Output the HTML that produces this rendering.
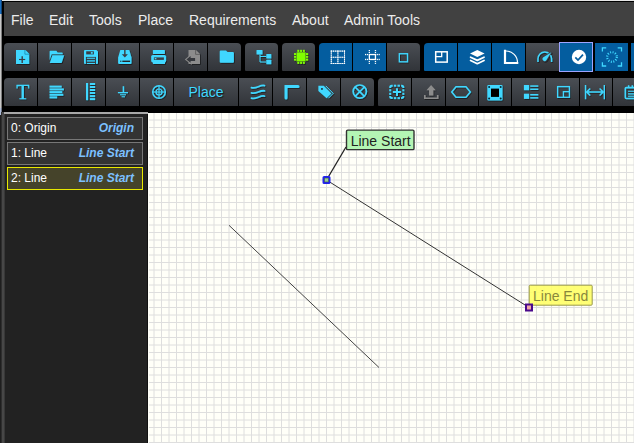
<!DOCTYPE html>
<html><head><meta charset="utf-8">
<style>
html,body{margin:0;padding:0;}
body{width:634px;height:443px;overflow:hidden;background:#000;position:relative;font-family:"Liberation Sans",sans-serif;}
.abs{position:absolute;}
#menubar{left:4px;top:2px;width:630px;height:34px;background:#414141;}
.mi{position:absolute;top:0;height:34px;line-height:36px;font-size:14px;color:#ececec;white-space:nowrap;}
.btn{position:absolute;height:28px;}
.btn.g{background:linear-gradient(#4a4e54,#313439);}
.btn.b{background:#045d9f;}
.btn.foc{box-shadow:0 0 0 1px #9ea4ff;}
.r1{top:43px;}
.r2{top:78px;}
.rl{border-radius:4px 0 0 1px;}
.rr{border-radius:0 4px 1px 0;}
.ra{border-radius:4px 4px 1px 1px;}
#panel{left:4px;top:112px;width:144px;height:331px;background:#222;}
.item{position:absolute;left:3px;width:134px;height:21px;border:1px solid #777;background:#333;font-size:12px;line-height:21px;color:#fff;}
.item .n{position:absolute;left:3px;top:0;}
.item .t{position:absolute;right:8px;top:0;color:#7cc0ff;font-style:italic;font-weight:bold;}
.item.sel{border-color:#e8e800;background:#45432a;}
#canvas{left:148px;top:113px;width:486px;height:330px;background:#fffff8;}
#place{position:absolute;left:174px;top:78px;width:64px;height:28px;line-height:28px;text-align:center;font-size:14px;color:#3fd7ff;text-shadow:1px 1px 1px rgba(0,0,0,.6);}
</style></head><body>
<!-- window edges -->
<div class="abs" style="left:0;top:0;width:634px;height:1px;background:#e6e6e6"></div>
<div class="abs" style="left:0;top:0;width:1px;height:14px;background:#1b6fc0"></div>
<div class="abs" style="left:1px;top:0;width:1px;height:14px;background:#114578"></div>
<div class="abs" style="left:0;top:14px;width:1px;height:94px;background:#c8c8c8"></div>
<div class="abs" style="left:1px;top:14px;width:1px;height:94px;background:#7d7d7d"></div>
<div class="abs" style="left:0;top:108px;width:1px;height:7px;background:#aebcd8"></div>
<div class="abs" style="left:1px;top:108px;width:1px;height:7px;background:#6d7587"></div>
<div class="abs" style="left:0;top:115px;width:2px;height:328px;background:#1e1e1e"></div>
<div class="abs" style="left:1px;top:112px;width:1px;height:331px;background:#2e2e2e"></div>
<div class="abs" style="left:2px;top:112px;width:2px;height:331px;background:#474747"></div>

<div id="menubar" class="abs">
<span class="mi" style="left:7px">File</span>
<span class="mi" style="left:45px">Edit</span>
<span class="mi" style="left:85px">Tools</span>
<span class="mi" style="left:134px">Place</span>
<span class="mi" style="left:185px">Requirements</span>
<span class="mi" style="left:288px">About</span>
<span class="mi" style="left:340px">Admin Tools</span>
</div>

<div class="btn r1 g rl" style="left:4px;width:33px"></div>
<div class="btn r1 g" style="left:38px;width:33px"></div>
<div class="btn r1 g" style="left:72px;width:33px"></div>
<div class="btn r1 g" style="left:106px;width:33px"></div>
<div class="btn r1 g" style="left:140px;width:33px"></div>
<div class="btn r1 g" style="left:174px;width:33px"></div>
<div class="btn r1 g rr" style="left:208px;width:33px"></div>
<div class="btn r1 g ra" style="left:245px;width:33px"></div>
<div class="btn r1 g ra" style="left:282px;width:33px"></div>
<div class="btn r1 b rl" style="left:319px;width:33px"></div>
<div class="btn r1 b" style="left:353px;width:33px"></div>
<div class="btn r1 g rr" style="left:387px;width:33px"></div>
<div class="btn r1 b rl" style="left:424px;width:33px"></div>
<div class="btn r1 b" style="left:458px;width:33px"></div>
<div class="btn r1 b" style="left:492px;width:33px"></div>
<div class="btn r1 g" style="left:526px;width:33px"></div>
<div class="btn r1 b foc" style="left:560px;width:32px"></div>
<div class="btn r1 b" style="left:595px;width:33px"></div>
<div class="btn r1 b" style="left:631px;width:3px"></div>
<div class="btn r2 g rl" style="left:4px;width:33px"></div>
<div class="btn r2 g" style="left:38px;width:33px"></div>
<div class="btn r2 g" style="left:72px;width:33px"></div>
<div class="btn r2 g" style="left:106px;width:33px"></div>
<div class="btn r2 g" style="left:140px;width:33px"></div>
<div class="btn r2 g" style="left:174px;width:64px"></div>
<div class="btn r2 g" style="left:239px;width:33px"></div>
<div class="btn r2 g" style="left:273px;width:33px"></div>
<div class="btn r2 g" style="left:307px;width:33px"></div>
<div class="btn r2 g rr" style="left:341px;width:33px"></div>
<div class="btn r2 g rl" style="left:378px;width:33px"></div>
<div class="btn r2 g" style="left:412px;width:33px"></div>
<div class="btn r2 g" style="left:446px;width:32px"></div>
<div class="btn r2 g" style="left:479px;width:32px"></div>
<div class="btn r2 g" style="left:512px;width:33px"></div>
<div class="btn r2 g" style="left:546px;width:33px"></div>
<div class="btn r2 g" style="left:580px;width:32px"></div>
<div class="btn r2 g" style="left:613px;width:21px"></div>

<div id="place">Place</div>
<svg width="634" height="112" style="position:absolute;left:0;top:0">
<defs><filter id="sh" x="-20%" y="-20%" width="150%" height="150%"><feDropShadow dx="0.8" dy="0.8" stdDeviation="0.5" flood-color="#000" flood-opacity="0.55"/></filter></defs>
<g filter="url(#sh)">
<!-- ROW 1 -->
<!-- new doc -->
<path d="M16 50H25.4L29.2 53.8V64H16Z" fill="#3fd7ff"/>
<path d="M24.9 50V54.2H29.2" fill="none" stroke="#2390b4" stroke-width="0.9"/>
<path d="M19 59.5H25.2" stroke="#3a3e44" stroke-width="1.1"/><path d="M22.2 56.2V62.9" stroke="#3a3e44" stroke-width="1.4"/>
<!-- folder open -->
<path d="M49.6 51.4a.7 .7 0 0 1 .7-.7H56.4L57.6 52.5H62a.7 .7 0 0 1 .7 .7V54.3H51.7L49.6 60.3Z" fill="#3fd7ff"/>
<path d="M52.4 55.2H64.2L61.6 62.9H49.7Z" fill="#3fd7ff"/>
<!-- save -->
<path d="M84 51a1 1 0 0 1 1-1H96.400L98 51.600V63a1 1 0 0 1-1 1H85a1 1 0 0 1-1-1Z" fill="#3fd7ff"/>
<rect x="86.200" y="51.300" width="7.700" height="3.100" fill="#3a3e44"/><rect x="90.800" y="51.900" width="2" height="1.900" rx=".5" fill="#3fd7ff"/>
<rect x="85.900" y="56.900" width="10" height="7.100" fill="#30343a"/>
<rect x="86.800" y="57.700" width="8.200" height="1.100" fill="#3fd7ff"/><rect x="86.800" y="59.900" width="8.200" height="1.900" fill="#2fb2da"/><rect x="86.800" y="62.900" width="8.200" height="1.100" fill="#3fd7ff"/>
<!-- save as -->
<path d="M120.3 50H129.3L131.5 57.5V63a1 1 0 0 1-1 1H119.1a1 1 0 0 1-1-1V57.5Z" fill="#3fd7ff"/>
<rect x="124.150" y="49.8" width="1.400" height="5" fill="#3a3e44"/><path d="M121.8 54.3H127.9L124.85 57.4Z" fill="#3a3e44"/>
<rect x="122.3" y="60.600" width="7.800" height="1.400" fill="#23272c"/><rect x="120.300" y="60.600" width="1" height="1.400" fill="#23272c"/>
<!-- print -->
<rect x="152.9" y="50" width="12" height="4.100" rx=".5" fill="#3fd7ff"/>
<rect x="151.2" y="54.9" width="14.9" height="7.5" rx="1.6" fill="#3fd7ff"/>
<rect x="152.9" y="60" width="12.100" height="3.900" rx=".5" fill="#3fd7ff"/>
<rect x="153.9" y="57.4" width="10" height="2.500" fill="#3a3e44"/>
<rect x="154.700" y="58" width="1.700" height="1.300" fill="#3fd7ff"/>
<!-- export (disabled) -->
<path d="M188.5 50H196L200 54V64H188.5Z" fill="#8c8c8c"/>
<path d="M195.6 50V54.4H200" fill="none" stroke="#5c5c5c" stroke-width="0.9"/>
<path d="M186.400 59.500L190.600 55.900V58.100H195.100V60.900H190.600V62.800Z" fill="#34373c" stroke="#8c8c8c" stroke-width="2" paint-order="stroke" stroke-linejoin="miter"/>
<!-- folder -->
<path d="M219.7 51.6a1 1 0 0 1 1-1H226L227.5 52H232.9a1 1 0 0 1 1 1V61.7a1 1 0 0 1-1 1H220.7a1 1 0 0 1-1-1Z" fill="#3fd7ff"/>
<!-- tree -->
<rect x="256.5" y="50" width="6" height="4.6" rx=".5" fill="#3fd7ff"/>
<rect x="266.3" y="54" width="5" height="4.5" rx=".5" fill="#3fd7ff"/>
<rect x="266.3" y="59.7" width="5" height="4.5" rx=".5" fill="#3fd7ff"/>
<path d="M260 54.5V62H266.3M260 56.5H266.3" fill="none" stroke="#3fd7ff" stroke-width="1"/>
<!-- chip -->
<g fill="#80ff00">
<rect x="296.6" y="52.4" width="8.9" height="8.9"/>
<rect x="297.3" y="49.8" width="1.9" height="2.1"/><rect x="300.1" y="49.8" width="1.9" height="2.1"/><rect x="302.9" y="49.8" width="1.9" height="2.1"/>
<rect x="297.3" y="61.8" width="1.9" height="2.1"/><rect x="300.1" y="61.8" width="1.9" height="2.1"/><rect x="302.9" y="61.8" width="1.9" height="2.1"/>
<rect x="294" y="53.1" width="2.1" height="1.9"/><rect x="294" y="55.9" width="2.1" height="1.9"/><rect x="294" y="58.7" width="2.1" height="1.9"/>
<rect x="306" y="53.1" width="2.1" height="1.9"/><rect x="306" y="55.9" width="2.1" height="1.9"/><rect x="306" y="58.7" width="2.1" height="1.9"/>
</g>
</g>
<!-- grid (white on blue, no shadow) -->
<g fill="none" stroke="#ffffff">
<rect x="331.3" y="51.1" width="13.2" height="12.4" stroke-width="1.05" stroke-opacity=".5"/>
<path d="M337.9 51.1V63.5M331.3 57.3H344.5" stroke-width="1.05" stroke-opacity=".5"/>
<path d="M330.700 51.1H345.100M330.700 57.3H345.100M330.700 63.5H345.100" stroke-width="1.05" stroke-dasharray="1.2 1" />
<path d="M331.3 50.500V64.100M337.9 50.500V64.100M344.5 50.500V64.100" stroke-width="1.05" stroke-dasharray="1.2 0.870" />
<!-- hash -->
<rect x="369.350" y="54.550" width="6.100" height="4.900" stroke-width="1.3"/>
<g fill="#ffffff" stroke="none"><rect x="368.7" y="50" width="1.3" height="1.2"/><rect x="368.7" y="52" width="1.3" height="1.1"/><rect x="368.7" y="60.9" width="1.3" height="1.1"/><rect x="368.7" y="62.8" width="1.3" height="1.1"/><rect x="374.8" y="50" width="1.3" height="1.2"/><rect x="374.8" y="52" width="1.3" height="1.1"/><rect x="374.8" y="60.9" width="1.3" height="1.1"/><rect x="374.8" y="62.8" width="1.3" height="1.1"/><rect x="365" y="53.9" width="1.2" height="1.3"/><rect x="366.9" y="53.9" width="1.2" height="1.3"/><rect x="376.7" y="53.9" width="1.2" height="1.3"/><rect x="378.6" y="53.9" width="1.2" height="1.3"/><rect x="365" y="58.8" width="1.2" height="1.3"/><rect x="366.9" y="58.8" width="1.2" height="1.3"/><rect x="376.7" y="58.8" width="1.2" height="1.3"/><rect x="378.6" y="58.8" width="1.2" height="1.3"/></g>
<!-- plan -->
<rect x="435.7" y="51.8" width="11.5" height="10.3" stroke-width="1.5"/>
<path d="M441.7 51.8V56.6H435.7" stroke-width="1.3"/>
<!-- quarter -->
<path d="M505 49.8V63H518.3" stroke-width="2.2"/>
<path d="M506 51A11.5 11.5 0 0 1 517.5 62.5" stroke-width="1.15"/>
</g>
<!-- layers -->
<path d="M470 53.5L477.3 50L484.6 53.5L477.3 57Z" fill="#ffffff"/>
<path d="M470.6 57.2L477.3 60.4L484 57.2M470.6 60.5L477.3 63.7L484 60.5" fill="none" stroke="#ffffff" stroke-width="1.8" stroke-linejoin="round" stroke-linecap="round"/>
<!-- check -->
<circle cx="579" cy="57" r="7.2" fill="#ffffff"/>
<path d="M575.3 57.3L578 60L583 54.6" fill="none" stroke="#045d9f" stroke-width="1.7"/>
<!-- dashed circle -->
<g fill="none" stroke="#3fd7ff">
<path d="M602.4 51.6V47.8H606.2M617.7 47.8H621.5V51.6M621.5 62.2V66H617.7M606.2 66H602.4V62.2" stroke-width="1.3"/>
<circle cx="612" cy="57" r="4.8" stroke-width="2.2" stroke-dasharray="1 1.513"/>
</g>
<g filter="url(#sh)">
<!-- square -->
<rect x="399.3" y="53.7" width="8.2" height="8.1" fill="none" stroke="#3fd7ff" stroke-width="1.3"/>
<!-- gauge -->
<path d="M537.950 62.100V58.750A6.800 6.800 0 0 1 551.550 58.750V62.100" fill="none" stroke="#3fd7ff" stroke-width="1.5"/>
<path d="M551.300 52.300L543 57.400A2.100 2.100 0 1 0 546.300 60.300Z" fill="#3fd7ff" stroke="#3c4046" stroke-width="1.400" paint-order="stroke"/>

<!-- ROW 2 -->
<text x="22.9" y="99" font-family="Liberation Serif" font-size="21.5" text-anchor="middle" fill="#3fd7ff" stroke="#3fd7ff" stroke-width="0.3">T</text>
<!-- align -->
<g fill="#3fd7ff">
<rect x="49.5" y="85.6" width="12.2" height="2"/><rect x="49.5" y="88.4" width="14.4" height="2"/><rect x="49.5" y="91.1" width="12.7" height="2"/><rect x="49.5" y="93.8" width="13.8" height="2"/><rect x="49.5" y="96.4" width="7.6" height="2"/>
<!-- vertical -->
<rect x="86" y="83" width="2.1" height="17.2"/>
<rect x="89.9" y="83" width="5.2" height="2"/><rect x="89.9" y="86" width="5.2" height="2"/><rect x="89.9" y="89" width="5.2" height="2"/><rect x="89.9" y="92" width="5.2" height="2"/><rect x="89.9" y="95.1" width="5.2" height="2"/><rect x="89.9" y="98.1" width="5.2" height="2"/>
</g>
<!-- ground -->
<path d="M123.4 86.2V92.3" stroke="#3fd7ff" stroke-width="1.5"/>
<path d="M117.9 92.6H128M120 94.7H126M121.6 96.7H125" stroke="#3fd7ff" stroke-width="1.1"/>
<!-- target -->
<g fill="none" stroke="#3fd7ff"><circle cx="159" cy="92" r="6.3" stroke-width="1.5"/><circle cx="159" cy="92" r="3" stroke-width="1.2"/><path d="M159 85.5V98.5M152.5 92H165.500" stroke-width="1"/></g>
<!-- waves -->
<g fill="none" stroke="#3fd7ff" stroke-width="1.8" stroke-linecap="round">
<path d="M251.5 87.6C256 89.4 260 84.400 264.500 85.6"/>
<path d="M251.5 92.9C256 94.7 260 89.700 264.500 90.9"/>
<path d="M251.5 98.100C256 99.900 260 94.900 264.500 96.100"/>
</g>
<!-- corner -->
<path d="M286 98V86.500H298" fill="none" stroke="#3fd7ff" stroke-width="3" stroke-linecap="round" stroke-linejoin="miter"/>
<!-- tags -->
<path d="M318.400 85.700H323.700L331.400 93.400L326.600 98.200L318.400 90.900Z" fill="#3fd7ff"/>
<path d="M325.800 85.900L333.200 93.400L328.500 98.200" fill="none" stroke="#3fd7ff" stroke-width="1"/>
<rect x="321.100" y="88.100" width="1.700" height="1.700" rx=".4" fill="#1c1f24"/>
<!-- circle x -->
<g fill="none" stroke="#3fd7ff" stroke-width="1.7"><circle cx="359.75" cy="91.6" r="6.6"/><path d="M355.100 87L364.400 96.300M364.400 87L355.100 96.300"/></g>
<!-- dashed square plus -->
<g fill="none" stroke="#3fd7ff" stroke-width="2">
<path d="M390.200 88V87.200A1.500 1.500 0 0 1 391.700 85.700H392.700"/><path d="M401.100 85.700H401.800A1.500 1.500 0 0 1 403.300 87.200V88"/>
<path d="M403.300 96.100V96.600A1.500 1.500 0 0 1 401.800 98.100H401.100"/><path d="M392.700 98.100H391.700A1.500 1.500 0 0 1 390.200 96.600V96.100"/>
<path d="M392.900 92H401.100M397 88.200V95.900"/>
</g>
<g fill="#3fd7ff">
<rect x="393.900" y="84.700" width="2.300" height="2"/><rect x="397.500" y="84.700" width="2.400" height="2"/>
<rect x="393.900" y="97.100" width="2.300" height="2"/><rect x="397.500" y="97.100" width="2.400" height="2"/>
<rect x="389.200" y="89.200" width="2" height="2.100"/><rect x="389.200" y="92.800" width="2" height="2.100"/>
<rect x="402.300" y="89.200" width="2" height="2.100"/><rect x="402.300" y="92.800" width="2" height="2.100"/>
</g>
<!-- upload (disabled) -->
<path d="M431.100 85L435.700 90.200H433.300V95.500H429V90.200H426.500Z" fill="#8c8c8c"/>
<path d="M424.800 95V98.200H437.700V95" fill="none" stroke="#8c8c8c" stroke-width="1.6"/>
<!-- hexagon -->
<path d="M451.700 92L456 86.700H466L470.300 92L466 97.300H456Z" fill="none" stroke="#3fd7ff" stroke-width="1.5"/>
<!-- square filled -->
<rect x="487.300" y="85" width="15.200" height="15.400" rx="1" fill="#3fd7ff"/>
<rect x="491" y="88.600" width="8" height="8.300" fill="#000"/>
<g fill="#0a2a36"><circle cx="489.100" cy="86.900" r="1"/><circle cx="500.700" cy="86.900" r="1"/><circle cx="489.100" cy="98.500" r="1"/><circle cx="500.700" cy="98.500" r="1"/></g>
<!-- list -->
<g fill="#3fd7ff">
<rect x="523.900" y="85" width="5.200" height="5.200"/><rect x="530.200" y="85.300" width="8.100" height="1.500"/><rect x="530.200" y="88.500" width="8.100" height="1.500"/>
<rect x="523.900" y="93.700" width="5.200" height="5.200"/><rect x="530.200" y="94" width="8.100" height="1.500"/><rect x="530.200" y="97.100" width="8.100" height="1.500"/>
</g>
<!-- window -->
<g fill="none" stroke="#3fd7ff" stroke-width="1.3"><rect x="557.600" y="86.600" width="11.800" height="10.700"/><path d="M563.400 97.300V91.600H569.400"/></g>
<!-- dimension -->
<g fill="none" stroke="#3fd7ff" stroke-width="1.4"><path d="M585.500 85V99.200M604.300 85V99.200"/><path d="M586.500 92H603.300M590.200 88.400L586.600 92L590.200 95.600M599.600 88.400L603.200 92L599.600 95.600"/></g>
<!-- calendar (cut) -->
<g fill="none" stroke="#3fd7ff"><path d="M636 87.600H626.300a1 1 0 0 0-1 1V97.500a1 1 0 0 0 1 1H636" stroke-width="1.6"/><path d="M628.600 85.300V87.600M632.300 85.300V87.600" stroke-width="1.500"/><path d="M628 91.300H636M628 93.900H636M628 96.300H636" stroke-width="1.100"/></g>
</g>
</svg>


<div id="panel" class="abs">
 <div class="abs" style="left:0;top:0;width:144px;height:2px;background:#a8a8a8"></div>
 <div class="abs" style="left:0;top:2px;width:1px;height:329px;background:#383838"></div><div class="abs" style="left:143px;top:2px;width:1px;height:329px;background:#111"></div>
 <div class="item" style="top:5px"><span class="n">0: Origin</span><span class="t">Origin</span></div>
 <div class="item" style="top:30px"><span class="n">1: Line</span><span class="t">Line Start</span></div>
 <div class="item sel" style="top:55px"><span class="n">2: Line</span><span class="t">Line Start</span></div>
</div>

<div id="canvas" class="abs">
<svg width="486" height="330" style="position:absolute;left:0;top:0">
<defs><pattern id="g" width="15" height="15" patternUnits="userSpaceOnUse" x="0" y="0">
<path d="M6 0V15M13.5 0V15M0 7H15M0 14.5H15" stroke="#dedede" stroke-width="1" fill="none"/>
</pattern></defs>
<rect x="1" y="0" width="485" height="330" fill="url(#g)"/>
<line x1="81" y1="112.300" x2="231" y2="254.5" stroke="#444" stroke-width="1"/>
<line x1="178.5" y1="67" x2="381" y2="194.5" stroke="#333" stroke-width="1"/>
<line x1="178.5" y1="67" x2="198" y2="34" stroke="#222" stroke-width="1.3"/>
<rect x="175.5" y="64" width="6" height="6" rx=".6" fill="#9c9" stroke="#22e" stroke-width="2"/><rect x="176.600" y="65.100" width="3.800" height="3.800" fill="none" stroke="#353" stroke-opacity=".7" stroke-width=".7"/>
<rect x="198.5" y="17.100" width="67.500" height="19.500" rx="1.2" fill="#b4f5b4" stroke="#333" stroke-width="1.4"/>
<text x="202.700" y="32.5" font-size="14" fill="#222" font-family="Liberation Sans">Line Start</text>
<rect x="381.2" y="172.200" width="63" height="20" rx="1" fill="#ffff66" fill-opacity="0.9" stroke="#99994a" stroke-width="1"/>
<text x="385" y="187.9" font-size="14" fill="#88883c" font-family="Liberation Sans">Line End</text>
<rect x="378" y="191.500" width="6" height="6" fill="#f0a8a8" stroke="#4a0a8c" stroke-width="2"/>
</svg>
</div>
</body></html>
